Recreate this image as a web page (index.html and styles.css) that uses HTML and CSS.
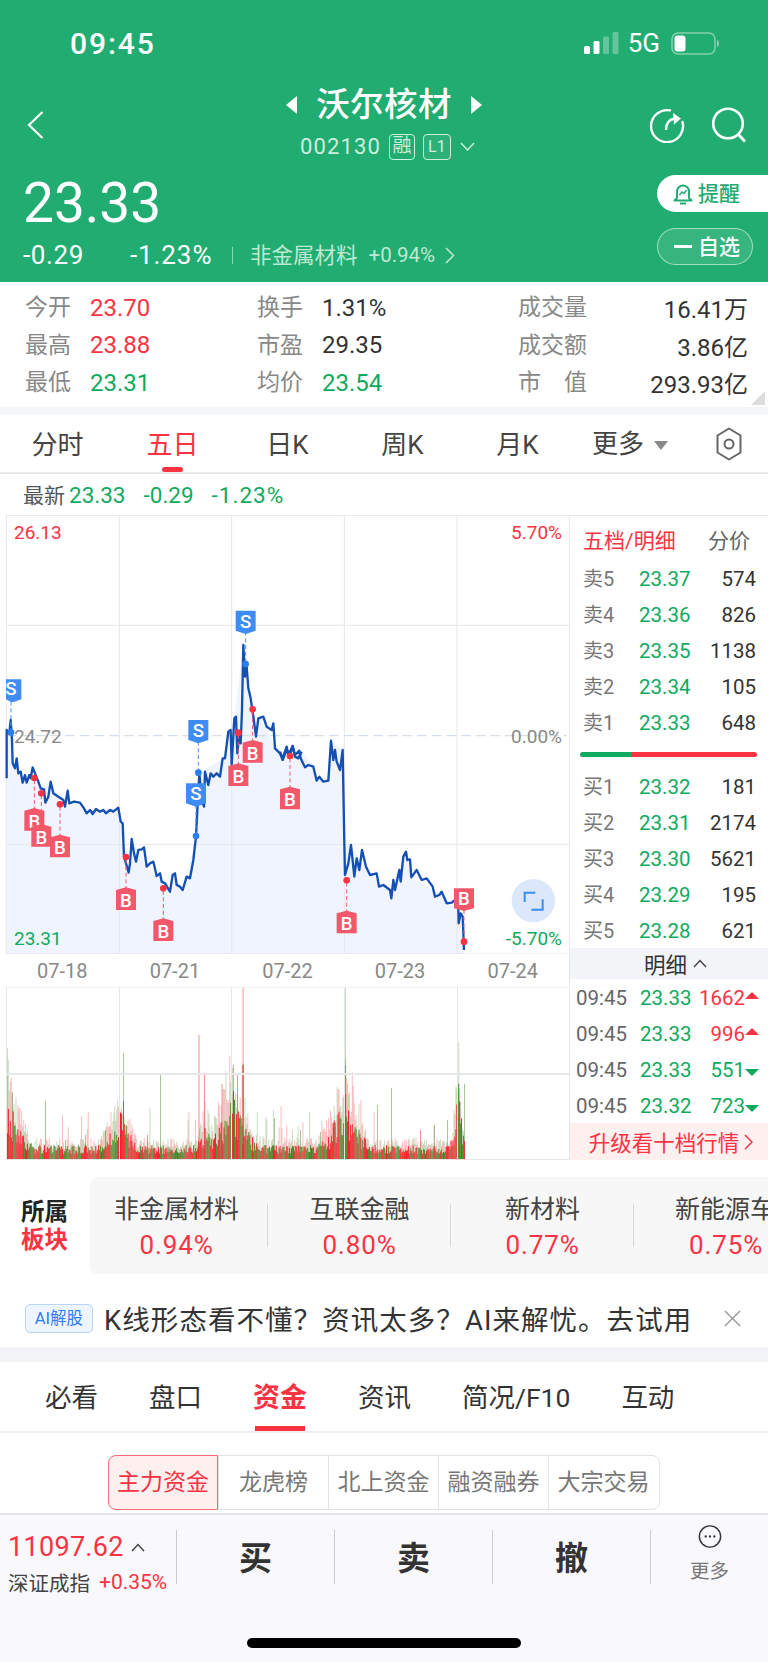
FILE: index.html
```html
<!DOCTYPE html>
<html lang="zh-CN">
<head>
<meta charset="utf-8">
<title>沃尔核材 002130</title>
<link rel="stylesheet" href="styles.css">
</head>
<body>
<div class="phone">

  <header class="head">
    <div class="status">
      <span class="clock">09:45</span>
      <div class="status-right">
        <svg class="signal" viewBox="0 0 35 22"><rect x="0" y="14" width="6" height="8" rx="1.5" fill="#fff"/><rect x="9.5" y="9" width="6" height="13" rx="1.5" fill="#fff"/><rect x="19" y="4.500" width="6" height="17.500" rx="1.500" fill="#fff" fill-opacity=".3"/><rect x="28.500" y="0" width="6" height="22" rx="1.500" fill="#fff" fill-opacity=".3"/></svg>
        <span class="net">5G</span>
        <svg class="battery" viewBox="0 0 48 23"><rect x="1" y="1" width="43" height="21" rx="6" fill="none" stroke="#fff" stroke-opacity=".45" stroke-width="1.500"/><rect x="3.500" y="3.500" width="11" height="16" rx="3" fill="#fff"/><path d="M46 8c1.500.5 2 2 2 3.500s-.5 3-2 3.500z" fill="#fff" fill-opacity=".45"/></svg>
      </div>
    </div>

    <div class="nav">
      <svg class="back" viewBox="0 0 17 28"><path d="M15.500 1 2 14l13.500 13" fill="none" stroke="#fff" stroke-width="2.200"/></svg>
      <div class="title-block">
        <div class="title-line">
          <i class="tri tri-left"></i>
          <h1 class="stock-name">沃尔核材</h1>
          <i class="tri tri-right"></i>
        </div>
        <div class="code-line">
          <span class="code">002130</span>
          <span class="tag">融</span>
          <span class="tag tag-l1">L1</span>
          <svg class="code-more" viewBox="0 0 15 9"><path d="m1 1 6.500 7L14 1" fill="none" stroke="#cfeedd" stroke-width="1.500"/></svg>
        </div>
      </div>
      <div class="nav-tools">
        <svg class="tool" viewBox="0 0 36 36"><path d="M21 3.400A16 16 0 1 0 33.500 15" fill="none" stroke="#fff" stroke-width="2.400" stroke-linecap="round"/><path d="M17 23c0-6 2.500-10.500 9-11.500" fill="none" stroke="#fff" stroke-width="2.400"/><path d="m24 6 8 5.500-7 6z" fill="#fff"/></svg>
        <svg class="tool" viewBox="0 0 36 36"><circle cx="17" cy="16.500" r="14.800" fill="none" stroke="#fff" stroke-width="2.600"/><path d="m27 27 7 7.500" stroke="#fff" stroke-width="2.800" fill="none"/></svg>
      </div>
    </div>

    <div class="price-row">
      <div class="price-main">
        <div class="price">23.33</div>
        <div class="price-sub">
          <span class="chg">-0.29</span>
          <span class="pct">-1.23%</span>
          <i class="sub-sep"></i>
          <span class="sector-name">非金属材料</span>
          <span class="sector-pct">+0.94%</span>
          <svg class="sector-go" viewBox="0 0 10 17"><path d="m1 1 7.500 7.500L1 16" fill="none" stroke="#bfe8d2" stroke-width="1.500"/></svg>
        </div>
      </div>
      <div class="pills">
        <div class="pill pill-alert">
          <svg class="bell" viewBox="0 0 20 22"><path d="M4 15V8.500a6 6 0 0 1 12 0V15l2.500 2.500h-17z" fill="none" stroke="#21ad71" stroke-width="2" stroke-linejoin="round"/><path d="M7 20.500h6" stroke="#21ad71" stroke-width="2"/><path d="m6.500 12 2.500-3 2 1.500L13.500 7" fill="none" stroke="#21ad71" stroke-width="1.500"/></svg>
          <span class="pill-t">提醒</span>
        </div>
        <div class="pill pill-watch">
          <i class="minus"></i>
          <span class="pill-t">自选</span>
        </div>
      </div>
    </div>
  </header>

  <section class="stats">
    <div class="stat"><span class="stat-k">今开</span><span class="up">23.70</span></div>
    <div class="stat"><span class="stat-k">换手</span><span class="ink">1.31%</span></div>
    <div class="stat stat-wide"><span class="stat-k">成交量</span><span class="ink">16.41万</span></div>
    <div class="stat"><span class="stat-k">最高</span><span class="up">23.88</span></div>
    <div class="stat"><span class="stat-k">市盈</span><span class="ink">29.35</span></div>
    <div class="stat stat-wide"><span class="stat-k">成交额</span><span class="ink">3.86亿</span></div>
    <div class="stat"><span class="stat-k">最低</span><span class="down">23.31</span></div>
    <div class="stat"><span class="stat-k">均价</span><span class="down">23.54</span></div>
    <div class="stat stat-wide"><span class="stat-k stat-spread">市 值</span><span class="ink">293.93亿</span></div>
    <i class="corner"></i>
  </section>

  <nav class="period-tabs">
    <span class="period">分时</span>
    <span class="period is-on">五日</span>
    <span class="period">日K</span>
    <span class="period">周K</span>
    <span class="period">月K</span>
    <span class="period period-more">更多<i class="caret"></i></span>
    <svg class="hex" viewBox="0 0 26 34"><path d="M13 1.500 24.500 8.500v17L13 32.500 1.500 25.500v-17z" fill="none" stroke="#666" stroke-width="2" stroke-linejoin="round"/><circle cx="13" cy="17" r="4.500" fill="none" stroke="#666" stroke-width="2"/></svg>
  </nav>

  <div class="latest">
    <span class="latest-k">最新</span>
    <span class="down">23.33</span>
    <span class="down">-0.29</span>
    <span class="down latest-pct">-1.23%</span>
  </div>

  <div class="board">
    <div class="charts">
      <svg class="price-chart" viewBox="0 15 1710 1317">
        <!-- shaded area under the five-day line -->
        <path class="area" d="M20 1332V660L32 630L38 760L68 800L122 835L152 815L195 890L240 878L260 910L355 893L368 940L386 1088L395 987L440 1070L510 1145L525 1090L548 1140L588 980L598 790L668 745L692 660L703 625L730 405L760 620L790 620L825 715L848 750L905 725L940 765L950 812L985 812L993 692L1028 720L1033 1000L1053 1005L1110 1095L1170 1140L1218 1025L1234 1102L1318 1150L1340 1180L1376 1195L1392 1320V1332z"/>
        <!-- grid -->
        <g class="grid">
          <path d="M19 15V1332M358 15V1332M695 15V1332M1033 15V1332M1371 15V1332M1708 15V1332"/>
          <path d="M19 16H1710M19 346H1708M19 1003H1708M19 1332H1710"/>
        </g>
        <path class="zero-line" d="M19 677H1700"/>
        <!-- price line, two stretches -->
        <path class="line" d="M20 805L20 660L28 672L32 630L36 690L38 760L45 775L50 745L55 790L62 785L68 818L75 795L80 818L88 795L92 805L98 772L105 790L115 815L122 835L132 838L136 878L145 860L152 815L160 850L175 860L190 870L195 890L203 842L208 880L222 875L240 878L252 895L260 910L270 900L278 912L288 897L300 905L310 900L318 910L330 900L340 905L355 893L362 935L368 940L372 1040L378 1060L386 1088L390 1060L395 987L402 1030L408 1055L415 1020L425 1018L432 1012L440 1070L450 1060L460 1055L470 1098L480 1090L485 1115L495 1120L510 1145L518 1095L525 1090L530 1125L540 1130L548 1140L560 1100L570 1105L580 1050L588 980L593 880L598 790L606 875L612 890L615 785L625 825L632 790L640 800L650 790L660 800L668 745L675 745L685 665L692 660L695 765L703 625L708 620L712 730L718 670L722 700L726 600L730 405L735 500L740 470L745 535L752 565L760 620L768 680L775 625L790 620L800 650L815 660L820 640L825 715L840 730L848 750L860 720L870 735L878 708L885 740L895 745L905 725"/>
        <g transform="translate(840 0)">
          <path class="line" d="M0 725L8 745L20 710L25 735L38 708L45 735L58 722L62 745L75 772L85 765L100 770L110 812L118 800L130 815L145 812L153 692L160 750L165 720L170 755L180 780L188 720L193 1000L195 1095L205 1060L213 1005L223 1100L230 1045L238 1080L246 1020L258 1070L270 1095L290 1090L297 1130L310 1125L330 1140L334 1165L340 1110L345 1140L358 1080L362 1115L370 1040L378 1025L382 1050L390 1048L394 1102L410 1080L425 1110L440 1105L458 1130L465 1160L478 1155L485 1145L500 1180L515 1178L525 1170L535 1195L536 1240L542 1210L548 1220L552 1320"/>
        </g>
        <!-- axis labels -->
        <text class="axis up-fill" x="42" y="86">26.13</text>
        <text class="axis mute-fill" x="42" y="698">24.72</text>
        <text class="axis down-fill" x="42" y="1306">23.31</text>
        <text class="axis axis-r up-fill" x="1686" y="86">5.70%</text>
        <text class="axis axis-r mute-fill" x="1686" y="698">0.00%</text>
        <text class="axis axis-r down-fill" x="1686" y="1306">-5.70%</text>
        <!-- sell marks -->
        <g class="stem-s"><path d="M33 575V660M737 365V455M595 695V780M588 885V970"/></g>
        <g class="dot-s"><circle cx="33" cy="667" r="10"/><circle cx="737" cy="462" r="10"/><circle cx="595" cy="788" r="10"/><circle cx="588" cy="978" r="10"/></g>
        <g class="mark mark-s"><path d="M18 508H64V568L41 576 33 576 18 568z"/><text x="33" y="556">S</text></g>
        <g class="mark mark-s" transform="translate(737 332)"><path d="M-30-30H30V30L0 40-30 30z"/><text x="0" y="21">S</text></g>
        <g class="mark mark-s" transform="translate(595 660)"><path d="M-30-30H30V30L0 40-30 30z"/><text x="0" y="21">S</text></g>
        <g class="mark mark-s" transform="translate(588 850)"><path d="M-30-30H30V30L0 40-30 30z"/><text x="0" y="21">S</text></g>
        <!-- buy marks -->
        <g class="stem-b"><path d="M103 810V900M124 856V945M180 890V978M378 1048V1135M490 1142V1230M715 675V765M758 605V695M870 745V835M1040 1118V1205M1392 1200V1290"/></g>
        <g class="dot-b"><circle cx="103" cy="804" r="10"/><circle cx="124" cy="850" r="10"/><circle cx="180" cy="883" r="10"/><circle cx="378" cy="1041" r="10"/><circle cx="490" cy="1135" r="10"/><circle cx="715" cy="668" r="10"/><circle cx="758" cy="598" r="10"/><circle cx="870" cy="738" r="10"/><circle cx="1040" cy="1111" r="10"/><circle cx="1392" cy="1295" r="10"/></g>
        <g class="mark mark-b" transform="translate(103 932)"><path d="M-30-30 0-38 30-30V30H-30z"/><text x="0" y="21">B</text></g>
        <g class="mark mark-b" transform="translate(124 980)"><path d="M-30-30 0-38 30-30V30H-30z"/><text x="0" y="21">B</text></g>
        <g class="mark mark-b" transform="translate(180 1012)"><path d="M-30-30 0-38 30-30V30H-30z"/><text x="0" y="21">B</text></g>
        <g class="mark mark-b" transform="translate(378 1170)"><path d="M-30-30 0-38 30-30V30H-30z"/><text x="0" y="21">B</text></g>
        <g class="mark mark-b" transform="translate(490 1263)"><path d="M-30-30 0-38 30-30V30H-30z"/><text x="0" y="21">B</text></g>
        <g class="mark mark-b" transform="translate(715 798)"><path d="M-30-30 0-38 30-30V30H-30z"/><text x="0" y="21">B</text></g>
        <g class="mark mark-b" transform="translate(758 728)"><path d="M-30-30 0-38 30-30V30H-30z"/><text x="0" y="21">B</text></g>
        <g class="mark mark-b" transform="translate(870 868)"><path d="M-30-30 0-38 30-30V30H-30z"/><text x="0" y="21">B</text></g>
        <g class="mark mark-b" transform="translate(1040 1240)"><path d="M-30-30 0-38 30-30V30H-30z"/><text x="0" y="21">B</text></g>
        <g class="mark mark-b mark-flip" transform="translate(1392 1165)"><path d="M-30-30H30V30L0 38-30 30z"/><text x="0" y="21">B</text></g>
        <!-- full-screen button -->
        <circle class="expand-bg" cx="1600" cy="1172" r="65"/>
        <path class="expand-ico" d="M1574 1176V1148H1606M1628 1168V1199H1594"/>
      </svg>

      <div class="dates">
        <span>07-18</span><span>07-21</span><span>07-22</span><span>07-23</span><span>07-24</span>
      </div>

      <svg class="volume-chart" viewBox="0 987 570 173">
        <g id="vol-bars"></g>
        <g class="vol-grid">
          <path d="M6.500 987V1160M119.500 987V1160M231.500 987V1160M344.500 987V1160M457.500 987V1160M569.500 987V1160"/>
          <path class="vol-mid" d="M6 1074H569"/>
          <path d="M6 987H570M6 1159.500H570"/>
        </g>
      </svg>
    </div>

    <aside class="depth">
      <div class="depth-head"><span class="depth-title">五档/明细</span><span class="depth-alt">分价</span></div>
      <div class="lvl"><span class="lvl-k">卖5</span><span class="down">23.37</span><span class="lvl-v">574</span></div>
      <div class="lvl"><span class="lvl-k">卖4</span><span class="down">23.36</span><span class="lvl-v">826</span></div>
      <div class="lvl"><span class="lvl-k">卖3</span><span class="down">23.35</span><span class="lvl-v">1138</span></div>
      <div class="lvl"><span class="lvl-k">卖2</span><span class="down">23.34</span><span class="lvl-v">105</span></div>
      <div class="lvl"><span class="lvl-k">卖1</span><span class="down">23.33</span><span class="lvl-v">648</span></div>
      <div class="ratio"><i class="ratio-sell"></i></div>
      <div class="lvl"><span class="lvl-k">买1</span><span class="down">23.32</span><span class="lvl-v">181</span></div>
      <div class="lvl"><span class="lvl-k">买2</span><span class="down">23.31</span><span class="lvl-v">2174</span></div>
      <div class="lvl"><span class="lvl-k">买3</span><span class="down">23.30</span><span class="lvl-v">5621</span></div>
      <div class="lvl"><span class="lvl-k">买4</span><span class="down">23.29</span><span class="lvl-v">195</span></div>
      <div class="lvl"><span class="lvl-k">买5</span><span class="down">23.28</span><span class="lvl-v">621</span></div>
      <div class="tick-head">明细<svg class="tick-fold" viewBox="0 0 14 9"><path d="m1 8 6-6.500L13 8" fill="none" stroke="#444" stroke-width="1.500"/></svg></div>
      <div class="ticks">
        <div class="tick"><span class="tick-t">09:45</span><span class="down">23.33</span><span class="up tick-v">1662</span><i class="arr arr-up"></i></div>
        <div class="tick"><span class="tick-t">09:45</span><span class="down">23.33</span><span class="up tick-v">996</span><i class="arr arr-up"></i></div>
        <div class="tick"><span class="tick-t">09:45</span><span class="down">23.33</span><span class="down tick-v">551</span><i class="arr arr-down"></i></div>
        <div class="tick"><span class="tick-t">09:45</span><span class="down">23.32</span><span class="down tick-v">723</span><i class="arr arr-down"></i></div>
      </div>
      <div class="upgrade">升级看十档行情<svg class="upgrade-go" viewBox="0 0 9 16"><path d="m1 1 7 7-7 7" fill="none" stroke="#fa3343" stroke-width="1.500"/></svg></div>
    </aside>
  </div>

  <section class="sectors">
    <div class="sectors-label"><span>所属</span><span class="up">板块</span></div>
    <div class="sectors-list">
      <div class="sector"><span class="sector-t">非金属材料</span><span class="up sector-v">0.94%</span></div>
      <div class="sector"><span class="sector-t">互联金融</span><span class="up sector-v">0.80%</span></div>
      <div class="sector"><span class="sector-t">新材料</span><span class="up sector-v">0.77%</span></div>
      <div class="sector sector-cut"><span class="sector-t">新能源车</span><span class="up sector-v">0.75%</span></div>
    </div>
  </section>

  <div class="ai-tip">
    <span class="ai-badge">AI解股</span>
    <span class="ai-text">K线形态看不懂&#xFF1F;资讯太多&#xFF1F;AI来解忧。去试用</span>
    <svg class="ai-close" viewBox="0 0 18 18"><path d="m1 1 16 16M17 1 1 17" stroke="#999" stroke-width="1.500" fill="none"/></svg>
  </div>

  <nav class="sec-tabs">
    <span class="sec">必看</span>
    <span class="sec">盘口</span>
    <span class="sec is-on">资金</span>
    <span class="sec">资讯</span>
    <span class="sec">简况/F10</span>
    <span class="sec">互动</span>
  </nav>

  <div class="seg-wrap">
    <div class="seg">
      <span class="seg-item is-on">主力资金</span>
      <span class="seg-item">龙虎榜</span>
      <span class="seg-item">北上资金</span>
      <span class="seg-item">融资融券</span>
      <span class="seg-item">大宗交易</span>
    </div>
  </div>

  <footer class="trade">
    <div class="trade-row">
      <div class="index">
        <div class="index-top"><span class="up index-val">11097.62</span><svg class="index-fold" viewBox="0 0 14 9"><path d="m1 8 6-6.500L13 8" fill="none" stroke="#444" stroke-width="1.500"/></svg></div>
        <div class="index-sub"><span>深证成指</span><span class="up index-pct">+0.35%</span></div>
      </div>
      <div class="act">买</div>
      <div class="act">卖</div>
      <div class="act">撤</div>
      <div class="act-more">
        <svg class="more-ico" viewBox="0 0 32 32"><circle cx="16" cy="16" r="14.800" fill="none" stroke="#333" stroke-width="2"/><circle cx="10" cy="16" r="1.600" fill="#333"/><circle cx="16" cy="16" r="1.600" fill="#333"/><circle cx="22" cy="16" r="1.600" fill="#333"/></svg>
        <span>更多</span>
      </div>
    </div>
    <i class="home-bar"></i>
  </footer>
</div>
<script src="chart.js"></script>
</body>
</html>
```

FILE: styles.css
```css
* { box-sizing: border-box; }
html, body { margin: 0; padding: 0; background: #fff; }
body { font-family: Roboto, "Noto Sans CJK SC", sans-serif; color: #333; }
i { display: block; font-style: normal; }
svg { display: block; }

.phone { width: 768px; height: 1662px; overflow: hidden; position: relative; }
.up { color: #fa3343; }
.down { color: #10aa5e; }
.ink { color: #333; }

/* green header */
.head { height: 282px; background: #21ad71; color: #fff; }
.status { height: 86px; padding: 22px 49px 22px 70px; display: flex; align-items: center; justify-content: space-between; }
.clock { font-size: 30px; font-weight: 500; letter-spacing: 1.900px; }
.status-right { display: flex; align-items: center; }
.signal { width: 35px; height: 22px; }
.net { font-size: 26px; margin-left: 9px; }
.battery { width: 48px; height: 23px; margin-left: 11px; }

.nav { height: 78px; padding: 0 21px; display: grid; grid-template-columns: 1fr auto 1fr; align-items: center; }
.back { width: 17px; height: 28px; margin-left: 6px; }
.title-block { display: flex; flex-direction: column; align-items: center; margin-top: -2px; }
.title-line { display: flex; align-items: center; gap: 19px; height: 36px; }
.stock-name { margin: 0; font-size: 33.500px; font-weight: 500; line-height: 36px; letter-spacing: .4px; }
.tri { width: 0; height: 0; border-top: 9px solid transparent; border-bottom: 9px solid transparent; }
.tri-left { border-right: 11px solid #fff; }
.tri-right { border-left: 11px solid #fff; }
.code-line { display: flex; align-items: center; height: 30px; margin-top: 9px; padding-left: 7px; color: #cfeedd; }
.code { font-size: 22px; letter-spacing: 1.100px; }
.tag { width: 26px; height: 26px; margin-left: 8px; border: 1px solid #cfeedd; border-radius: 4px; font-size: 19px; line-height: 22px; text-align: center; }
.tag-l1 { width: 28px; font-size: 16px; line-height: 24px; background: rgba(255,255,255,.06); }
.code-more { width: 15px; height: 9px; margin-left: 9px; }
.nav-tools { display: flex; gap: 26px; justify-content: flex-end; }
.tool { width: 36px; height: 36px; }

.price-row { display: flex; justify-content: space-between; height: 118px; }
.price-main { padding: 9px 0 0 23px; }
.price { font-size: 55px; line-height: 60px; height: 60px; }
.price-sub { display: flex; align-items: center; height: 24px; margin-top: 10px; font-size: 26px; }
.chg { width: 107px; letter-spacing: .6px; }
.pct { width: 102px; letter-spacing: .9px; }
.sub-sep { width: 1px; height: 17px; background: rgba(255,255,255,.5); }
.sector-name { margin-left: 17px; margin-top: -4px; font-size: 21.500px; color: #bfe8d2; }
.sector-pct { margin-left: 11px; font-size: 20.500px; color: #bfe8d2; }
.sector-go { width: 10px; height: 17px; margin-left: 10px; }

.pills { padding-top: 11px; display: flex; flex-direction: column; align-items: flex-end; }
.pill { height: 37px; display: flex; align-items: center; font-size: 21px; font-weight: 500; }
.pill-t { margin-top: -3px; }
.pill-alert { width: 111px; padding-left: 16px; border-radius: 18.500px 0 0 18.500px; background: #fff; color: #21ad71; }
.bell { width: 20px; height: 22px; margin-right: 5px; }
.pill-watch { width: 96px; margin-top: 16px; margin-right: 15px; padding-left: 16px; border: 1px solid rgba(255,255,255,.55); border-radius: 18.500px; background: rgba(255,255,255,.1); }
.minus { width: 18px; height: 3px; margin-right: 6px; background: #fff; }

/* quote statistics */
.stats { height: 125px; padding: 7px 20px 0 25px; display: grid; grid-template-columns: 232px 261px 1fr; grid-auto-rows: 37.500px; position: relative; font-size: 24px; }
.stat { display: flex; align-items: center; }
.stat-k { width: 65px; margin-top: -5px; font-size: 23px; color: #888; white-space: nowrap; }
.stat-wide { justify-content: space-between; }
.stat-wide .stat-k { width: 69px; }
.stat-spread { text-align-last: justify; }
.corner { position: absolute; right: 3px; bottom: 2px; width: 14px; height: 14px; background: #ddd; clip-path: polygon(100% 0, 100% 100%, 0 100%); }

/* chart period tabs */
.period-tabs { margin-top: 8px; height: 59px; border-bottom: 2px solid #e9e9e9; display: flex; align-items: center; box-shadow: 0 -8px 0 #f4f5f9; }
.period { width: 115px; height: 57px; line-height: 60px; text-align: center; font-size: 26px; color: #444; position: relative; }
.period.is-on { color: #fa3343; }
.period.is-on::after { content: ""; position: absolute; left: 47px; bottom: 0; width: 21px; height: 5px; border-radius: 3px; background: #fa3343; }
.period-more { width: 100px; margin-left: 17px; display: flex; align-items: center; gap: 10px; justify-content: flex-start; }
.caret { width: 0; height: 0; border-left: 7px solid transparent; border-right: 7px solid transparent; border-top: 9px solid #888; margin-top: 3px; }
.hex { width: 26px; height: 34px; margin-left: 24px; }

.latest { height: 41px; padding-left: 23px; display: flex; align-items: center; gap: 18px; font-size: 22.500px; }
.latest-k { margin-right: -14px; margin-top: -2px; font-size: 21px; color: #555; }
.latest-pct { letter-spacing: 1px; }

/* chart plus order book */
.board { height: 645px; display: flex; }
.charts { width: 570px; flex: none; }
.price-chart { width: 570px; height: 439px; }
.area { fill: #eff4fe; }
.grid path, .vol-grid path { fill: none; stroke: #e7e7e9; stroke-width: 3; }
.vol-grid path { stroke-width: 1; }
.vol-grid .vol-mid { stroke-width: 2; }
.zero-line { fill: none; stroke: #d5dfea; stroke-width: 4; stroke-dasharray: 30 14; }
.line { fill: none; stroke: #1450b4; stroke-width: 7; stroke-linejoin: round; }
.axis { font-size: 57px; font-family: Roboto, sans-serif; }
.axis-r { text-anchor: end; }
.up-fill { fill: #fa3343; }
.down-fill { fill: #10aa5e; }
.mute-fill { fill: #888; }
.stem-s path, .stem-b path { fill: none; stroke-width: 3; stroke-dasharray: 12 8; }
.stem-s path { stroke: #4a93f5; }
.stem-b path { stroke: #f3586a; }
.dot-s { fill: #2a7ff0; }
.dot-b { fill: #fa3343; }
.mark text { font-size: 56px; font-weight: 500; fill: #fff; text-anchor: middle; font-family: Roboto, sans-serif; }
.mark-s path { fill: #3f8cf5; }
.mark-b path { fill: #f3586a; }
.expand-bg { fill: #dbe7fb; }
.expand-ico { fill: none; stroke: #3f8cf5; stroke-width: 6; }

.dates { width: 570px; height: 33px; padding-left: 6px; display: flex; border-right: 1px solid #e7e7e9; font-size: 20px; line-height: 35px; color: #888; }
.dates span { flex: 1; text-align: center; }
.volume-chart { width: 570px; height: 173px; }

.depth { flex: 1; border-top: 1px solid #e7e7e9; display: flex; flex-direction: column; }
.depth-head { height: 45px; padding: 0 18px 0 13px; display: flex; align-items: center; justify-content: space-between; font-size: 21px; }
.depth-title { color: #fa3343; }
.depth-alt { color: #666; }
.lvl { height: 36px; flex: none; padding: 0 12px 0 13px; display: grid; grid-template-columns: 56px 1fr auto; align-items: center; font-size: 20.500px; }
.lvl-k { margin-top: -4px; color: #777; font-size: 20px; }
.lvl-v { color: #333; }
.ratio { height: 28px; flex: none; padding: 10.500px 11px 0 10px; position: relative; }
.ratio::before { content: ""; display: block; height: 5px; border-radius: 3px; background: linear-gradient(100deg, #10aa5e 0 29%, #fa3343 29.500% 100%); }
.tick-head { height: 31px; flex: none; margin-top: -1px; padding-left: 13px; background: #f3f4f8; display: flex; align-items: center; justify-content: center; gap: 6px; font-size: 21.500px; color: #333; }
.tick-fold { width: 14px; height: 9px; }
.ticks { height: 144px; flex: none; padding-top: 1px; }
.tick { height: 36px; padding: 0 9px 0 6px; display: grid; grid-template-columns: 64px 50px 1fr 14px; align-items: center; font-size: 20.500px; }
.tick-t { color: #666; }
.tick-v { text-align: right; }
.arr { width: 0; height: 0; border-left: 7px solid transparent; border-right: 7px solid transparent; }
.arr-up { border-bottom: 7px solid #fa3343; margin-bottom: 5px; }
.arr-down { border-top: 7px solid #10aa5e; margin-top: 5px; }
.upgrade { height: 37px; flex: none; padding-left: 4px; background: #fff0f0; display: flex; align-items: center; justify-content: center; gap: 5px; font-size: 21.500px; color: #fa3343; }
.upgrade-go { width: 9px; height: 16px; }

/* sector strip */
.sectors { height: 114px; padding: 17px 0 0 21px; display: flex; }
.sectors-label { width: 69px; height: 97px; flex: none; display: flex; flex-direction: column; justify-content: center; font-size: 23.500px; font-weight: 700; line-height: 28px; color: #222; }
.sectors-list { flex: 1; height: 97px; padding: 16px 0; border-radius: 8px 0 0 8px; background: #f7f7f8; display: flex; overflow: hidden; }
.sector { width: 183px; flex: none; display: flex; flex-direction: column; align-items: center; position: relative; left: -5px; }
.sector::after { content: ""; position: absolute; right: 0; top: 11px; width: 1px; height: 43px; background: #d8d8d8; }
.sector:last-child::after { display: none; }
.sector-cut { align-items: flex-start; padding-left: 41px; }
.sector-cut .sector-v { margin-left: 14px; }
.sector-t { height: 33px; font-size: 25px; line-height: 33px; color: #444; white-space: nowrap; }
.sector-v { height: 33px; margin-top: 3px; font-size: 26px; line-height: 33px; letter-spacing: .9px; }

/* AI tip */
.ai-tip { height: 73px; padding: 15px 27px 0 25px; display: flex; align-items: center; }
.ai-badge { width: 68px; height: 29px; border: 1px solid #b9d4fb; border-radius: 5px; background: #eef5ff; color: #2f7cf3; font-size: 16.500px; line-height: 27px; text-align: center; }
.ai-text { margin-left: 11px; font-size: 27.500px; letter-spacing: 1.050px; color: #333; white-space: nowrap; }
.ai-close { width: 17px; height: 17px; margin-left: auto; }

/* section tabs */
.sec-tabs { height: 86px; border-top: 15px solid #f3f4f8; border-bottom: 2px solid #eee; display: flex; padding-left: 45px; }
.sec { position: relative; height: 69px; margin-right: 51px; font-size: 26.500px; line-height: 72px; color: #333; white-space: nowrap; }
.sec.is-on { color: #fa3343; font-size: 27px; font-weight: 700; }
.sec.is-on::after { content: ""; position: absolute; left: 2px; right: 2px; bottom: 0; height: 5px; background: #fa3343; }

.seg-wrap { height: 80px; padding: 22px 0 0 108px; }
.seg { width: 552px; height: 55px; border: 1px solid #e2e2e2; border-radius: 8px; display: flex; }
.seg-item { width: 110px; flex: none; border-left: 1px solid #e2e2e2; font-size: 23px; line-height: 53px; text-align: center; color: #777; white-space: nowrap; }
.seg-item:first-child { border-left: 0; }
.seg-item.is-on { margin: -1px 0 -1px -1px; height: 55px; border: 1px solid #fa6a77; border-radius: 8px 0 0 8px; background: #fff0f0; color: #fa3343; line-height: 53px; }

/* trade bar */
.trade { height: 149px; border-top: 2px solid #e5e5e7; background: #f9f9fc; padding-top: 15px; }
.trade-row { height: 54px; display: flex; }
.index { width: 176px; flex: none; padding-left: 8px; }
.index-top { display: flex; align-items: center; height: 34px; }
.index-val { font-size: 27px; letter-spacing: .3px; }
.index-fold { width: 14px; height: 9px; margin-left: 7px; }
.index-sub { display: flex; align-items: center; margin-top: 3px; font-size: 20.500px; color: #444; white-space: nowrap; }
.index-pct { margin-left: 9px; font-size: 21px; }
.act { width: 158px; flex: none; border-left: 1px solid #ccc; text-align: center; font-size: 33px; font-weight: 700; line-height: 58px; color: #333; }
.act-more { flex: 1; border-left: 1px solid #ccc; display: flex; flex-direction: column; align-items: center; }
.act-more span { font-size: 19.500px; line-height: 24px; color: #777; margin-top: 12px; }
.more-ico { width: 32px; height: 32px; margin-top: -5px; }
.home-bar { width: 274px; height: 10px; margin: 54px auto 0; border-radius: 5px; background: #000; }
```

FILE: chart.js
```js
// Draws the five-day volume bars into the lower chart.
(function () {
  var NS = 'http://www.w3.org/2000/svg';
  var host = document.getElementById('vol-bars');
  var BASE = 1160;
  var RED = '#f5222f';
  var GREEN = '#4f8f2f';

  // Notable prints: [x, top, colour]
  var spikes = [
    [242.6, 987, RED], [344.6, 988, GREEN], [123, 1053, GREEN], [198.5, 1035, RED],
    [160, 1073, GREEN], [204, 1074, RED], [221.5, 1084, RED], [233, 1065, GREEN],
    [6.5, 1076, GREEN], [12, 1092, GREEN], [45, 1101, GREEN], [391, 1088, GREEN],
    [464, 1084, GREEN], [458, 1091, GREEN], [377, 1105, GREEN], [274, 1118, GREEN],
    [119, 1105, GREEN], [147, 1135, RED], [237, 1075, RED], [348, 1120, RED],
    [85, 1135, GREEN], [65, 1140, GREEN], [105, 1130, GREEN], [300, 1130, GREEN],
    [320, 1132, GREEN], [434, 1125, GREEN], [447, 1120, GREEN], [420, 1130, RED]
  ];

  var seed = 20240724;
  function rnd() {
    seed = (seed * 1664525 + 1013904223) % 4294967296;
    return seed / 4294967296;
  }

  // Turnover swells at each session open and around the busiest stretch.
  function swell(x) {
    var opens = [[6, 16, 55], [119, 14, 42], [231, 16, 60], [344, 16, 55], [458, 5, 60], [205, 12, 28]];
    var h = 10;
    opens.forEach(function (o) {
      var d = Math.abs(x - o[0]);
      h = Math.max(h, o[2] * Math.exp(-d / o[1]));
    });
    return h;
  }

  function bar(x, top, colour, opacity) {
    var r = document.createElementNS(NS, 'rect');
    r.setAttribute('x', x.toFixed(2));
    r.setAttribute('y', top.toFixed(1));
    r.setAttribute('width', '1');
    r.setAttribute('height', (BASE - top).toFixed(1));
    r.setAttribute('fill', colour);
    r.setAttribute('fill-opacity', opacity);
    host.appendChild(r);
  }

  // Faint, taller layer first, then the dense low body.
  for (var x = 6; x < 464.5; x += 0.95) {
    var c = rnd() < 0.5 ? RED : GREEN;
    var hi = swell(x) * (1 + rnd() * 1.2) + (rnd() < 0.1 ? rnd() * 40 : 0);
    bar(x, BASE - hi, c, 0.3);
  }
  spikes.forEach(function (s) { bar(s[0], s[1], s[2], 0.5); });
  for (var x2 = 6; x2 < 464.5; x2 += 0.95) {
    var c2 = rnd() < 0.55 ? RED : GREEN;
    bar(x2, BASE - swell(x2) * (0.4 + rnd() * 0.9) - 2, c2, 1);
  }
  spikes.slice(0, 3).forEach(function (s) {
    bar(s[0], s[1] + (BASE - s[1]) * 0.45, s[2], 1);
  });
})();
```
